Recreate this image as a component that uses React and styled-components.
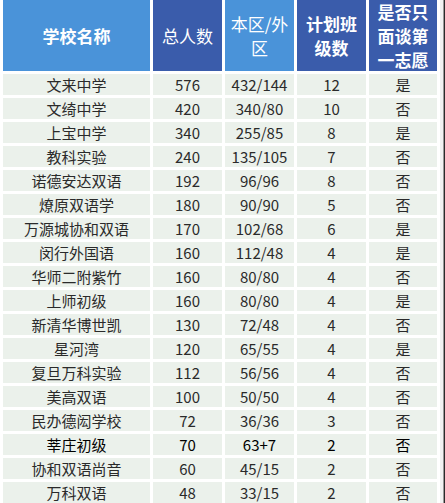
import React from "react";
import styled, { createGlobalStyle } from "styled-components";

const Global = createGlobalStyle`
  html, body { margin: 0; padding: 0; background: #ffffff; }
  body { font-family: "Noto Sans CJK SC", "Noto Sans", sans-serif; overflow: hidden; }
`;

const Page = styled.div`
  width: 445px;
  height: 503px;
  display: flex;
  overflow: hidden;
  background: #ffffff;
`;

const Table = styled.div`
  margin-left: 3px;
  width: 434px;
  display: grid;
  grid-template-columns: 147px 69px 69px 69px 68px;
  grid-template-rows: 71px;
  grid-auto-rows: 21px;
  column-gap: 3px;
  row-gap: 3px;
`;

const Edge = styled.div`
  margin-left: 3px;
  width: 3px;
  background: #f2f2f2;
  border-right: 1px solid #9a9a9a;
`;

const Shade = styled.div`
  flex: 1;
  background: #2b2b2b;
`;

const Head = styled.div`
  background: ${(p) => (p.$dark ? "#3a5cab" : "#4a93d9")};
  color: #ffffff;
  font-size: 17px;
  font-weight: ${(p) => (p.$bold ? 700 : 400)};
  line-height: 24px;
  display: flex;
  align-items: center;
  justify-content: center;
  text-align: center;
  padding: 0 2px;
`;

const Cell = styled.div`
  background: #ebf1eb;
  color: ${(p) => (p.$strong ? "#000000" : "#2a2a2a")};
  font-size: 15px;
  line-height: 21px;
  display: flex;
  align-items: center;
  justify-content: center;
  white-space: nowrap;
`;

const rows = [
  ["文来中学", "576", "432/144", "12", "是"],
  ["文绮中学", "420", "340/80", "10", "否"],
  ["上宝中学", "340", "255/85", "8", "是"],
  ["教科实验", "240", "135/105", "7", "否"],
  ["诺德安达双语", "192", "96/96", "8", "否"],
  ["燎原双语学", "180", "90/90", "5", "否"],
  ["万源城协和双语", "170", "102/68", "6", "是"],
  ["闵行外国语", "160", "112/48", "4", "是"],
  ["华师二附紫竹", "160", "80/80", "4", "否"],
  ["上师初级", "160", "80/80", "4", "是"],
  ["新清华博世凯", "130", "72/48", "4", "否"],
  ["星河湾", "120", "65/55", "4", "是"],
  ["复旦万科实验", "112", "56/56", "4", "否"],
  ["美高双语", "100", "50/50", "4", "否"],
  ["民办德闳学校", "72", "36/36", "3", "否"],
  ["莘庄初级", "70", "63+7", "2", "否", true],
  ["协和双语尚音", "60", "45/15", "2", "否"],
  ["万科双语", "48", "33/15", "2", "否"],
];

export default function App() {
  return (
    <>
      <Global />
      <Page>
        <Table>
          <Head $bold>学校名称</Head>
          <Head $dark>总人数</Head>
          <Head>本区/外<br />区</Head>
          <Head $dark $bold>计划班<br />级数</Head>
          <Head $dark $bold>是否只<br />面谈第<br />一志愿</Head>
          {rows.map((r, i) =>
            r.slice(0, 5).map((v, j) => (
              <Cell key={`${i}-${j}`} $strong={r[5]}>
                {v}
              </Cell>
            ))
          )}
        </Table>
        <Edge />
        <Shade />
      </Page>
    </>
  );
}
